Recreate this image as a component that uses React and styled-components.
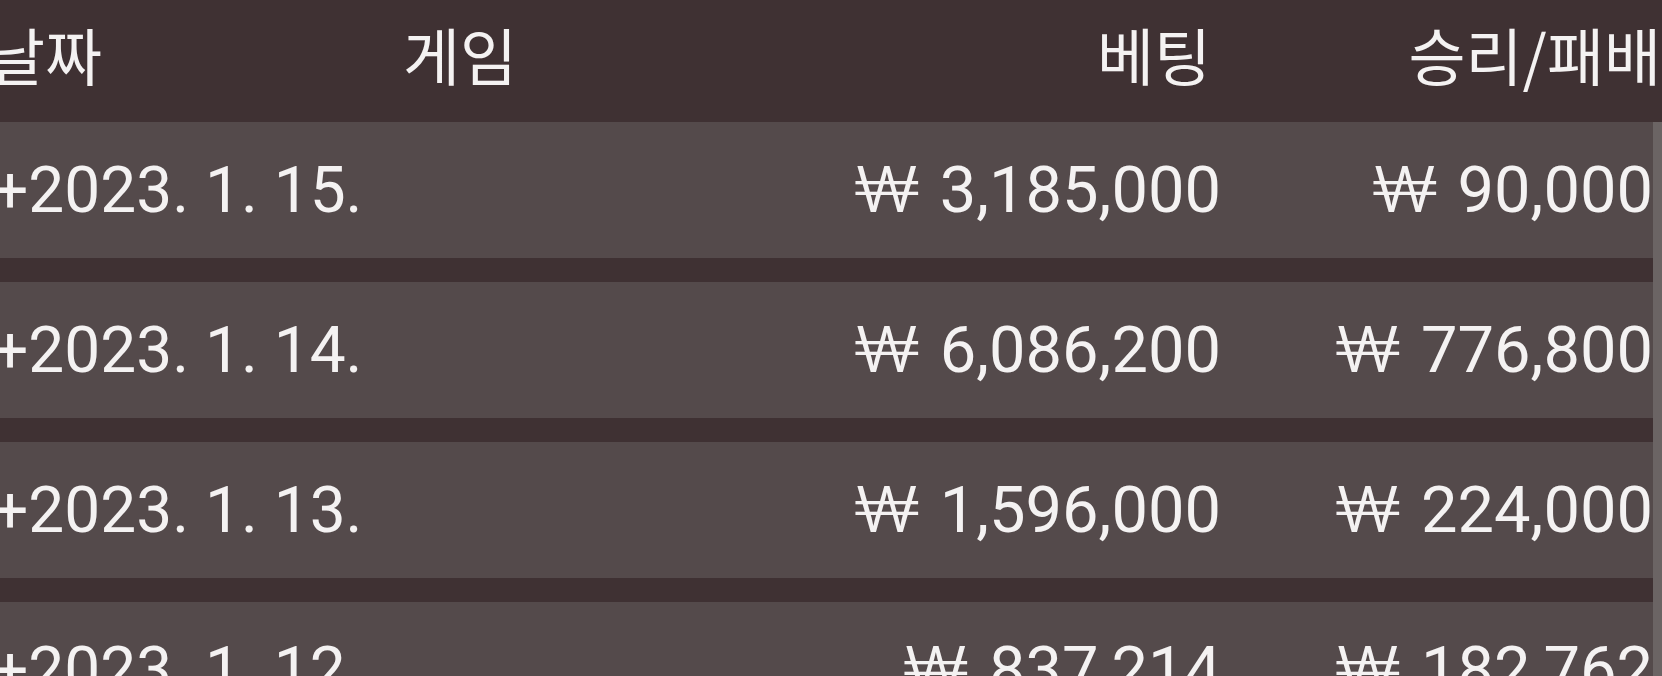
import styled, { createGlobalStyle } from "styled-components";

const GlobalStyle = createGlobalStyle`
  html, body {
    margin : 0;
    padding : 0;
    background-color : #3f3133;
    overflow : hidden;
  }
  body {
    font-family : "Roboto", "Noto Sans CJK KR", sans-serif;
    color : #f4f2f2;
  }
`;

const StyledTable = styled.div`
  width : 1674px;
  height : 676px;
  margin-left : -12px;
  overflow : hidden;
  background-color : #3f3133;
`;

const StyledHead = styled.div`
  display : grid;
  grid-template-columns : 415px 427px 391px 1fr;
  align-items : center;
  height : 122px;
  padding-bottom : 14px;
  box-sizing : border-box;
  font-family : "Noto Sans CJK KR", "Roboto", sans-serif;
  font-size : 62px;
  font-weight : 400;
`;

const StyledHeadCell = styled.div`
  text-align : ${(props) => (props.$right ? "right" : "left")};
  padding-right : ${(props) => props.$pr || 0}px;
  white-space : nowrap;
`;

const StyledBody = styled.div`
  display : flex;
  flex-direction : column;
  gap : 24px;
  border-right : 9px solid #6b6464;
`;

const StyledRow = styled.div`
  display : grid;
  grid-template-columns : 415px 427px 391px 1fr;
  align-items : center;
  height : 136px;
  flex-shrink : 0;
  background-color : #544a4b;
  font-size : 64px;
  font-weight : 400;
`;

const StyledCell = styled.div`
  text-align : ${(props) => (props.$right ? "right" : "left")};
  white-space : nowrap;
  padding-left : ${(props) => props.$pl || 0}px;
`;

const StyledAmount = styled.span`
  font-size : 65px;
`;

const StyledWon = styled.span`
  display : inline-block;
  font-weight : 300;
  transform : scaleX(1.35);
  transform-origin : right center;
  margin-right : 20px;
`;

const records = [
  { date: "+2023. 1. 15.", bet: "3,185,000", result: "90,000" },
  { date: "+2023. 1. 14.", bet: "6,086,200", result: "776,800" },
  { date: "+2023. 1. 13.", bet: "1,596,000", result: "224,000" },
  { date: "+2023. 1. 12.", bet: "837,214", result: "182,762" },
];

const App = () => {
  return (
    <>
      <GlobalStyle />
      <StyledTable>
        <StyledHead>
          <StyledHeadCell>날짜</StyledHeadCell>
          <StyledHeadCell>게임</StyledHeadCell>
          <StyledHeadCell $right $pr={10}>베팅</StyledHeadCell>
          <StyledHeadCell $right $pr={1}>승리/패배</StyledHeadCell>
        </StyledHead>
        <StyledBody>
          {records.map((e) => (
            <StyledRow key={e.date}>
              <StyledCell $pl={4}>{e.date}</StyledCell>
              <StyledCell></StyledCell>
              <StyledCell $right>
                <StyledWon>₩</StyledWon>
                <StyledAmount>{e.bet}</StyledAmount>
              </StyledCell>
              <StyledCell $right>
                <StyledWon>₩</StyledWon>
                <StyledAmount>{e.result}</StyledAmount>
              </StyledCell>
            </StyledRow>
          ))}
        </StyledBody>
      </StyledTable>
    </>
  );
};

export default App;
